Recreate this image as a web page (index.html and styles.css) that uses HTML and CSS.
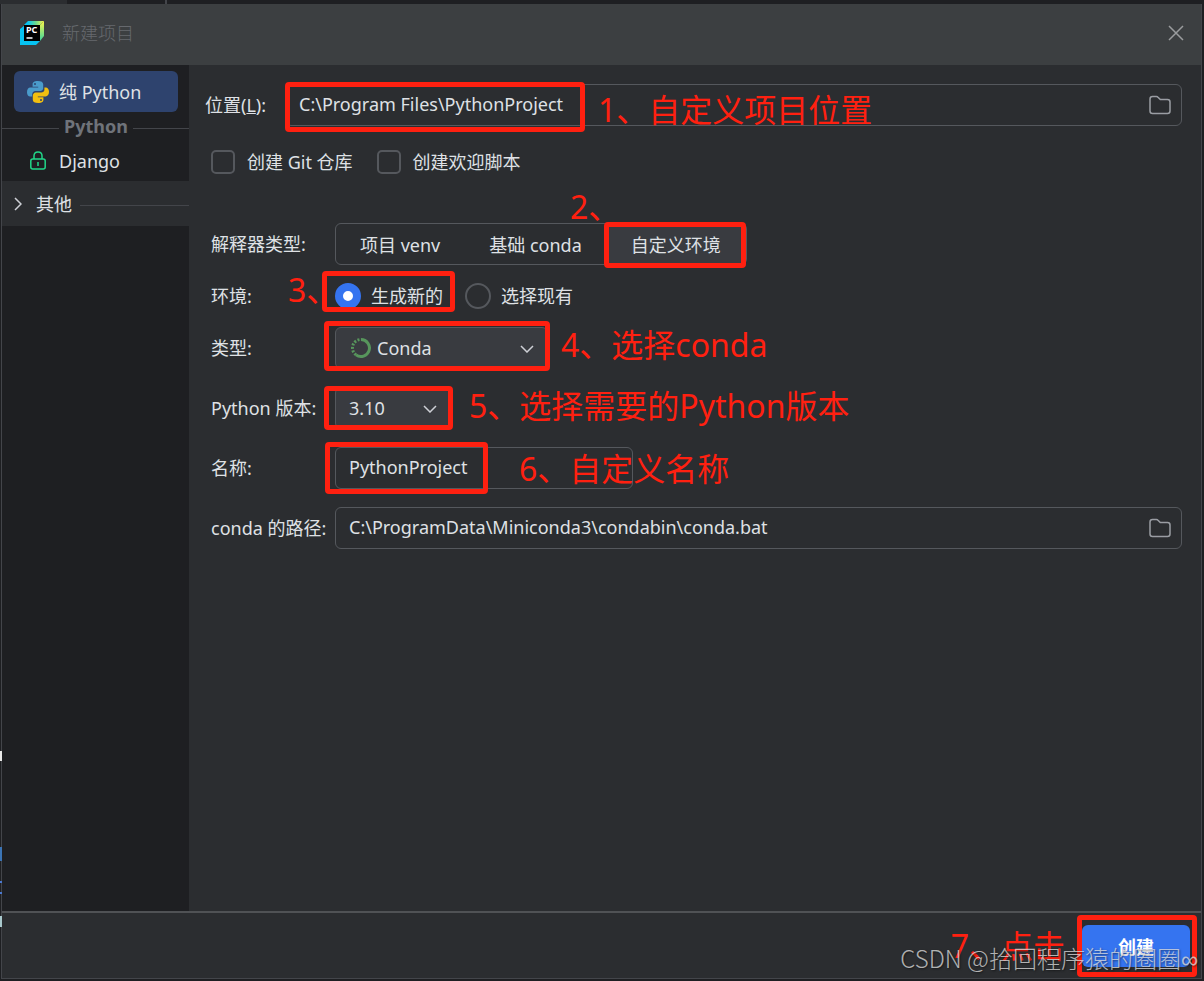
FILE: index.html
```html
<!DOCTYPE html>
<html lang="zh-CN">
<head>
    <meta charset="UTF-8">
    <meta name="viewport" content="width=device-width, initial-scale=1.0">
    <title>新建项目</title>
    <link rel="stylesheet" href="styles.css">
</head>
<body>
    <div class="dialog">
        <header class="titlebar">
            <svg class="logo" viewBox="0 0 24 24" width="24" height="24">
                <defs>
                    <linearGradient id="logoGreen" x1="0" y1="0" x2="1" y2="0">
                        <stop offset="0.2" stop-color="#07c3f2"/>
                        <stop offset="0.6" stop-color="#6fdc8c"/>
                        <stop offset="1" stop-color="#fcf84a"/>
                    </linearGradient>
                    <linearGradient id="logoSide" x1="0" y1="0" x2="0" y2="1">
                        <stop offset="0" stop-color="#fcf84a"/>
                        <stop offset="1" stop-color="#3ad6a0"/>
                    </linearGradient>
                </defs>
                <path d="M8 0H24L20 4H4Z" fill="url(#logoGreen)"/>
                <path d="M24 0V15L20 20V4Z" fill="url(#logoSide)"/>
                <path d="M0 8L5 4H8V20H20L16 24H0Z" fill="#07c3f2"/>
                <rect x="4" y="4" width="16" height="16" fill="#000"/>
                <path d="M6.5 17H12.500" stroke="#fff" stroke-width="1.500"/>
                <text x="6" y="12" class="logo-text">PC</text>
            </svg>
            <h1>新建项目</h1>
            <button type="button" class="close" aria-label="关闭">
                <svg viewBox="0 0 16 16" width="16" height="16"><path d="M1 1L15 15M15 1L1 15"/></svg>
            </button>
        </header>

        <div class="content">
            <nav class="sidebar">
                <a href="#" class="item selected">
                    <svg viewBox="0 0 22 22" width="22" height="22">
                        <path d="M10.8 0C7 0 5.600 1.400 5.600 3.300V5.800H11.200V6.600H3.400C1.300 6.600 0 8.400 0 11.200C0 14 1.400 15.600 3.200 15.600H5.200V13.200C5.200 11.400 6.600 10 8.400 10H13.200C14.900 10 16.200 8.800 16.200 7.200V3.300C16.200 1.200 14.200 0 10.800 0Z" fill="#4a9bcb"/>
                        <path d="M11.200 22C15 22 16.400 20.600 16.400 18.700V16.200H10.800V15.400H18.600C20.700 15.400 22 13.600 22 10.800C22 8 20.600 6.400 18.800 6.400H17.400V8.800C17.400 10.600 16 11.600 14.200 11.600H8.800C7.100 11.600 5.800 13.200 5.800 14.800V18.700C5.800 20.800 7.800 22 11.200 22Z" fill="#f2bf10"/>
                        <circle cx="8" cy="3" r="1" fill="#2e436e"/>
                        <circle cx="14" cy="19" r="1" fill="#2e436e"/>
                    </svg>
                    <span>纯 Python</span>
                </a>
                <div class="separator">Python</div>
                <a href="#" class="item">
                    <svg viewBox="0 0 22 22" width="22" height="22">
                        <g fill="none" stroke="#21d789" stroke-width="1.500">
                            <rect x="3.800" y="9" width="14.400" height="10" rx="2"/>
                            <path d="M7 9V6C7 3.500 8.600 2 11 2S15 3.500 15 6V9M11 12V16"/>
                        </g>
                    </svg>
                    <span>Django</span>
                </a>
                <button type="button" class="group">
                    <svg viewBox="0 0 8 14" width="8" height="14"><path d="M1 1L7 7L1 13"/></svg>
                    <span>其他</span>
                </button>
            </nav>

            <form class="main" id="projectForm">
                <div class="location">
                    <label for="location">位置(<u>L</u>):</label>
                    <div class="field">
                        <input type="text" id="location" value="C:\Program Files\PythonProject">
                        <button type="button" class="browse" aria-label="浏览">
                            <svg viewBox="0 0 22 20" width="22" height="20"><path d="M1 4Q1 1.500 3.500 1.500H7.500Q8.400 1.500 9 2.200L11.300 4.500H18.500Q21 4.500 21 7V16Q21 18.500 18.500 18.500H3.500Q1 18.500 1 16Z"/></svg>
                        </button>
                        <span class="mark mark-location"></span>
                        <span class="note note-location">1、自定义项目位置</span>
                    </div>
                </div>

                <div class="checks">
                    <label><input type="checkbox">创建 Git 仓库</label>
                    <label><input type="checkbox">创建欢迎脚本</label>
                </div>

                <div class="settings">
                    <span>解释器类型:</span>
                    <div class="segments">
                        <button type="button">项目 venv</button>
                        <button type="button">基础 conda</button>
                        <button type="button" class="active">自定义环境<span class="mark mark-custom"></span></button>
                        <span class="note note-custom">2、</span>
                    </div>

                    <span>环境:</span>
                    <div class="radios">
                        <label><input type="radio" name="env" checked>生成新的</label>
                        <label><input type="radio" name="env">选择现有</label>
                        <span class="mark mark-env"></span>
                        <span class="note note-env">3、</span>
                    </div>

                    <label for="type">类型:</label>
                    <div class="select select-type">
                        <svg class="conda" viewBox="0 0 22 22" width="22" height="22">
                            <path d="M11 2.500A8.500 8.500 0 1 1 6 17.900" stroke-width="3"/>
                            <path d="M6 17.900A8.500 8.500 0 0 1 11 2.500" stroke-width="3" stroke-dasharray="2 1.500"/>
                        </svg>
                        <select id="type"><option>Conda</option></select>
                        <svg class="arrow" viewBox="0 0 14 8" width="14" height="8"><path d="M1 1L7 7L13 1"/></svg>
                        <span class="mark mark-type"></span>
                        <span class="note note-type">4、选择conda</span>
                    </div>

                    <label for="version">Python 版本:</label>
                    <div class="select select-version">
                        <select id="version"><option>3.10</option></select>
                        <svg class="arrow" viewBox="0 0 14 8" width="14" height="8"><path d="M1 1L7 7L13 1"/></svg>
                        <span class="mark mark-version"></span>
                        <span class="note note-version">5、选择需要的Python版本</span>
                    </div>

                    <label for="name">名称:</label>
                    <div class="field field-name">
                        <input type="text" id="name" value="PythonProject">
                        <span class="mark mark-name"></span>
                        <span class="note note-name">6、自定义名称</span>
                    </div>

                    <label for="conda">conda 的路径:</label>
                    <div class="field">
                        <input type="text" id="conda" value="C:\ProgramData\Miniconda3\condabin\conda.bat">
                        <button type="button" class="browse" aria-label="浏览">
                            <svg viewBox="0 0 22 20" width="22" height="20"><path d="M1 4Q1 1.500 3.500 1.500H7.500Q8.400 1.500 9 2.200L11.300 4.500H18.500Q21 4.500 21 7V16Q21 18.500 18.500 18.500H3.500Q1 18.500 1 16Z"/></svg>
                        </button>
                    </div>
                </div>
            </form>
        </div>

        <footer class="footer">
            <div class="submit">
                <button type="submit" form="projectForm" class="create">创建</button>
                <span class="mark mark-create"></span>
                <span class="note note-create">7、点击</span>
            </div>
        </footer>
    </div>
    <div class="watermark">CSDN @拾回程序猿的圈圈<span>∞</span></div>
</body>
</html>
```
FILE: styles.css
```css
* {
    box-sizing: border-box;
}
body {
    margin: 0;
    padding: 4px 2px 2px 1px;
    min-height: 100vh;
    display: flex;
    position: relative;
    background-color: #1e1f22;
    color: #dfe1e5;
    font-family: "Noto Sans", "Noto Sans CJK SC", sans-serif;
    font-size: 18px;
    line-height: 24px;
}
/* editor window showing behind the dialog */
body::before {
    content: "";
    position: absolute;
    top: 0;
    left: 0;
    width: 167px;
    height: 4px;
    background: linear-gradient(to right, #2b2d30 67px, transparent 67px, transparent 165px, #43454a 165px);
}
body::after {
    content: "";
    position: absolute;
    top: 0;
    left: 0;
    width: 2px;
    height: 100%;
    background: linear-gradient(transparent 751px, #e8e8e8 751px, #e8e8e8 761px, transparent 761px, transparent 847px, #3b74b5 847px, #3b74b5 861px, transparent 861px, transparent 881px, #4a78d0 881px, #4a78d0 883px, transparent 883px, transparent 892px, #4a78d0 892px, #4a78d0 894px, transparent 894px, transparent 916px, #a8c8cc 916px, #a8c8cc 927px, transparent 927px);
}
button, input, select {
    margin: 0;
    font: inherit;
    color: inherit;
}
button {
    padding: 0;
    border: none;
    background: none;
    cursor: pointer;
}
svg {
    display: block;
    flex: none;
}
.dialog {
    flex: 1;
    display: flex;
    flex-direction: column;
    min-width: 0;
    border: 1px solid #43454a;
    border-top: none;
    background-color: #2b2d30;
}

/* Title bar */
.titlebar {
    display: flex;
    align-items: center;
    height: 61px;
    padding: 0 17px 3px 18px;
    background-color: #3c3f41;
}
.titlebar h1 {
    flex: 1;
    margin: 0 0 0 18px;
    font-size: 18px;
    font-weight: 300;
    color: #66696e;
}
.logo-text {
    font-family: "Noto Sans", sans-serif;
    font-size: 9px;
    font-weight: 700;
    fill: #fff;
}
.close path {
    fill: none;
    stroke: #9a9c9e;
    stroke-width: 1.5;
}
.content {
    flex: 1;
    display: flex;
}

/* Sidebar */
.sidebar {
    width: 187px;
    padding-top: 6px;
    background-color: #1e1f22;
}
.item {
    display: flex;
    align-items: center;
    gap: 10px;
    height: 41px;
    margin: 0 11px 0 12px;
    padding-left: 13px;
    border-radius: 6px;
    color: inherit;
    text-decoration: none;
}
.item.selected {
    background-color: #2e436e;
}
.separator {
    display: flex;
    align-items: center;
    gap: 5px;
    height: 28px;
    font-weight: 700;
    color: #6f737a;
}
.separator::before, .separator::after {
    content: "";
    width: 57px;
    height: 1px;
    margin-top: 5px;
    background-color: #43454a;
}
.separator::after {
    flex: 1;
}
.group {
    display: flex;
    align-items: center;
    gap: 14px;
    width: 100%;
    height: 45px;
    padding-left: 12px;
    background-color: #2b2d30;
}
.group::after {
    content: "";
    flex: 1;
    height: 1px;
    margin: 4px 0 0 -6px;
    background-color: #43454a;
}
.group path, .arrow path {
    fill: none;
    stroke: #ced0d6;
    stroke-width: 1.5;
}

/* Form */
.main {
    flex: 1;
    min-width: 0;
    padding: 19px 19px 19px 16px;
}
.location {
    display: flex;
    align-items: center;
}
.location label {
    width: 80px;
}
.field {
    flex: 1;
    display: flex;
    align-items: center;
    position: relative;
    height: 42px;
    border: 1px solid #55585d;
    border-radius: 6px;
}
.field input {
    flex: 1;
    min-width: 0;
    padding: 0 13px 2px;
    border: none;
    outline: none;
    background: none;
}
.field-name {
    width: 298px;
}
.browse {
    padding: 0 10px;
}
.browse path {
    fill: none;
    stroke: #9a9da3;
    stroke-width: 1.5;
}
.checks {
    display: flex;
    gap: 24px;
    margin: 24px 0 49px 6px;
}
.checks label, .radios label {
    display: flex;
    align-items: center;
    gap: 12px;
}
.checks input, .radios input {
    appearance: none;
    width: 24px;
    height: 24px;
    border: 2px solid #55585d;
    border-radius: 5px;
}
.settings {
    display: grid;
    grid-template-columns: 124px 1fr;
    align-items: center;
    row-gap: 18px;
    margin-left: 6px;
}
.segments {
    justify-self: start;
    display: flex;
    position: relative;
    height: 42px;
    border: 1px solid #55585d;
    border-radius: 6px;
}
.segments button {
    position: relative;
    padding: 1px 25px 0 24px;
}
.segments .active {
    border-radius: 5px;
    background-color: #393b40;
}
.radios {
    justify-self: start;
    display: flex;
    gap: 22px;
    position: relative;
}
.radios label {
    gap: 10px;
}
.radios input {
    width: 26px;
    height: 26px;
    border-radius: 50%;
}
.radios input:checked {
    border: 8px solid #3574f0;
    background-color: #fff;
}
.select {
    position: relative;
    height: 42px;
}
.select select {
    appearance: none;
    width: 100%;
    height: 100%;
    padding: 0 13px;
    border: 1px solid #55585d;
    border-radius: 6px;
    outline: none;
    background-color: #393b40;
}
.select-type {
    width: 213px;
}
.select-type select {
    padding-left: 41px;
}
.select-version {
    width: 116px;
}
.arrow {
    position: absolute;
    right: 14px;
    top: 18px;
}
.conda {
    position: absolute;
    left: 15px;
    top: 10px;
}
.conda path {
    fill: none;
    stroke: #57965c;
}

/* Footer */
.footer {
    display: flex;
    justify-content: flex-end;
    height: 67px;
    padding: 12px 11px;
    border-top: 2px solid #505255;
}
.submit {
    position: relative;
}
.create {
    width: 108px;
    height: 42px;
    padding-top: 2px;
    border-radius: 6px;
    background-color: #3574f0;
    color: #fff;
    font-weight: 700;
}

/* Red step annotations */
.mark {
    position: absolute;
    border: 5px solid #ff2010;
    border-radius: 4px;
    pointer-events: none;
}
.note {
    position: absolute;
    color: #ff2010;
    font-size: 32px;
    line-height: 40px;
    white-space: nowrap;
    pointer-events: none;
}
.mark-location {
    left: -1px;
    top: -3px;
    width: 300px;
    height: 50px;
}
.note-location {
    left: 312px;
    top: 5px;
}
.mark-custom {
    inset: -2px 0 -4px -3px;
}
.note-custom {
    left: 234px;
    top: -37px;
}
.mark-env {
    left: -13px;
    top: -12px;
    width: 133px;
    height: 41px;
}
.note-env {
    left: -47px;
    top: -13px;
}
.mark-type {
    inset: -6px -2px -2px -11px;
}
.note-type {
    left: 226px;
    top: -2px;
}
.mark-version {
    inset: -1px -2px -1px -11px;
}
.note-version {
    left: 134px;
    top: -1px;
}
.mark-name {
    left: -11px;
    top: -6px;
    width: 163px;
    height: 52px;
}
.note-name {
    left: 183px;
    top: 1px;
}
.mark-create {
    inset: -10px -7px -11px -5px;
}
.note-create {
    right: 125px;
    top: 1px;
}
.watermark {
    position: absolute;
    right: 6px;
    bottom: 5px;
    font-family: "Noto Sans CJK SC", sans-serif;
    font-size: 24px;
    font-weight: 300;
    line-height: 32px;
    color: rgba(225, 225, 225, 0.75);
    text-shadow: 1px 1px 2px rgba(0, 0, 0, 0.5);
    pointer-events: none;
}
.watermark span {
    font-family: "Liberation Sans", sans-serif;
}
```
